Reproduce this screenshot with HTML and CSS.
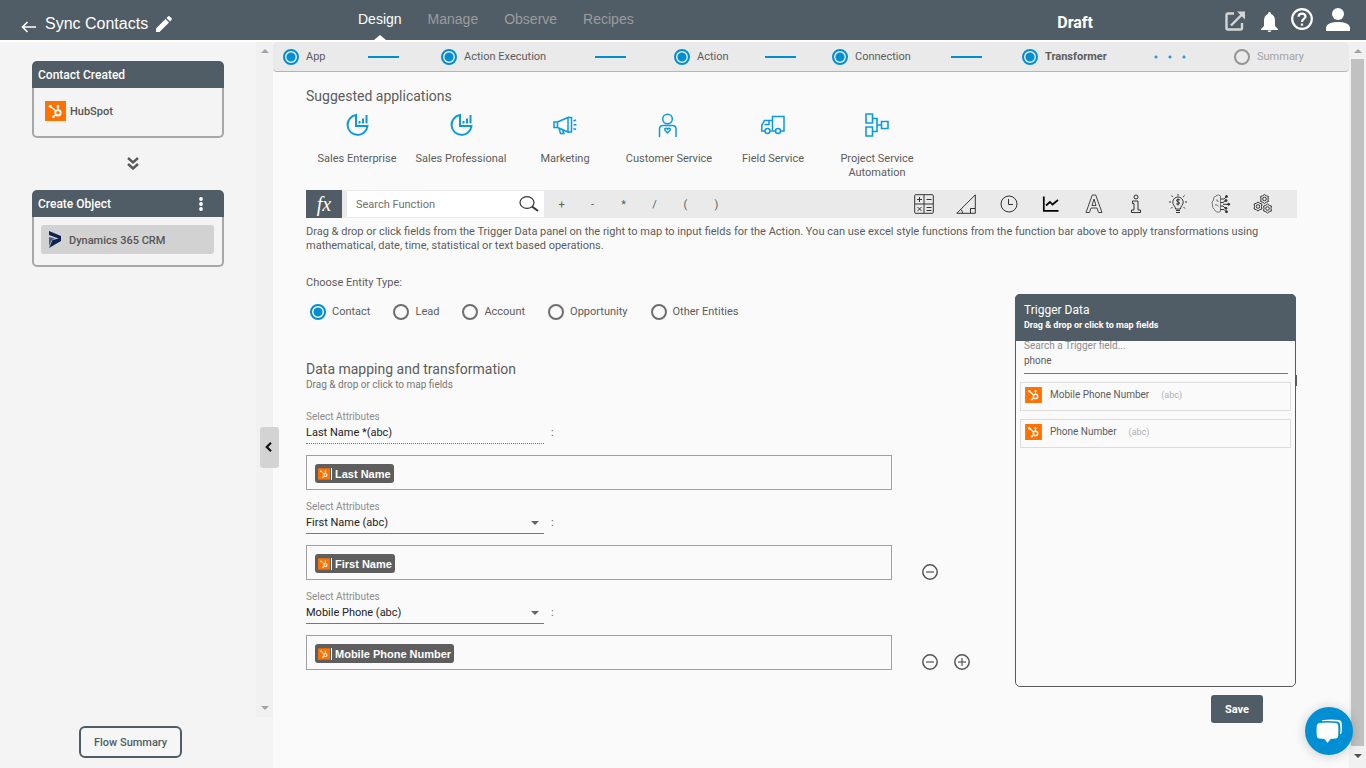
FILE: index.html
```html
<!DOCTYPE html>
<html lang="en">
<head>
<meta charset="utf-8">
<meta name="viewport" content="width=device-width, initial-scale=1">
<title>Sync Contacts</title>
<link rel="stylesheet" href="styles.css">
</head>
<body>
<svg class="defs" aria-hidden="true">
  <symbol id="hubspot" viewBox="0 0 21 20">
    <rect width="21" height="20" fill="#ff7200"/>
    <g fill="none" stroke="#fff" stroke-width="1.4">
      <circle cx="13" cy="11.8" r="2.7" stroke-width="1.8"/>
      <path d="M13 9V5.5M11 10L5.500 5.600M11 13.800L8.500 15.600"/>
    </g>
    <g fill="#fff"><circle cx="13" cy="5.200" r="1.300"/><circle cx="5.300" cy="5.200" r="1.500"/><circle cx="8.300" cy="15.700" r="1.200"/></g>
  </symbol>
  <symbol id="sales" viewBox="0 0 24 24">
    <g fill="none" stroke="#0b9ae0" stroke-width="2">
      <path d="M11 2A10 10 0 1 0 22.500 13H11Z"/>
      <path d="M14.500 10.500V8M18 10.500V5.500M21.500 10.500V2"/>
    </g>
  </symbol>
  <symbol id="minus" viewBox="0 0 16 16">
    <path d="M4 8H12" stroke="#555" stroke-width="1.200"/><circle cx="8" cy="8" r="7.200" fill="none" stroke="#555" stroke-width="1.500"/>
  </symbol>
</svg>

<header class="topbar">
  <div class="topbar-title">
    <a href="#" aria-label="Back"><svg width="16" height="12" viewBox="0 0 16 12" fill="none" stroke="#fff" stroke-width="1.600"><path d="M15 6H1.500M6.500 1L1.500 6L6.500 11"/></svg></a>
    <h1>Sync Contacts</h1>
    <button class="bare" aria-label="Edit name"><svg width="16" height="16" viewBox="0 0 16 16" fill="#fff"><path d="M0 16V12.500L9.500 3L13 6.500L3.500 16ZM10.500 2L12.300.300Q13 -.200 13.700.400L15.600 2.300Q16.200 3 15.600 3.700L14 5.500Z"/></svg></button>
  </div>
  <nav class="tabs">
    <a href="#" class="active">Design</a>
    <a href="#">Manage</a>
    <a href="#">Observe</a>
    <a href="#">Recipes</a>
  </nav>
  <strong class="status">Draft</strong>
  <div class="topbar-icons">
    <button class="bare" aria-label="Open"><svg width="20" height="20" viewBox="0 0 20 20" fill="none" stroke="#d3d6d8" stroke-width="2.400"><path d="M9 2.500H3Q1.500 2.500 1.500 4V17Q1.500 18.500 3 18.500H15.500Q17 18.500 17 17V12M6 14.500L16.500 4"/><path d="M12 .500H20V8.500Z" fill="#d3d6d8" stroke="none"/></svg></button>
    <button class="bare bell" aria-label="Notifications"><svg width="17" height="20" viewBox="0 0 17 20" fill="#fff"><path d="M7 2Q7 0 8.500 0T10 2Q14 3.500 14 8.500V14L17 17V18H0V17L3 14V8.500Q3 3.500 7 2ZM6.500 18.500H10.500Q10 20 8.500 20T6.500 18.500Z"/></svg></button>
    <button class="bare" aria-label="Help"><svg width="22" height="22" viewBox="0 0 22 22" fill="none" stroke="#fff" stroke-width="2.200"><circle cx="11" cy="11" r="9.800"/><path d="M7.500 8.800Q7.700 5.600 11 5.600T14.500 8.500C14.500 10.500 11 11 11 14"/><path d="M11 15.500V17.700"/></svg></button>
    <button class="bare user" aria-label="Account"><svg width="24" height="23" viewBox="0 0 24 23" fill="#fff"><ellipse cx="12" cy="6" rx="6" ry="6"/><path d="M0 23V19Q2 14 12 14T24 19V23Z"/></svg></button>
  </div>
</header>

<div class="shell">
  <aside class="side">
    <div class="side-scroll">
      <div class="flow">
        <section class="card">
          <h2>Contact Created</h2>
          <div class="card-body"><div class="conn"><svg width="21" height="20"><use href="#hubspot"/></svg><span>HubSpot</span></div></div>
        </section>
        <svg class="down" width="12" height="13" viewBox="0 0 12 13" fill="none" stroke="#58595b" stroke-width="2.400"><path d="M1 1L6 5.500L11 1M1 7L6 11.500L11 7"/></svg>
        <section class="card">
          <h2>Create Object
            <button class="bare" aria-label="More"><svg width="4" height="14" viewBox="0 0 4 14" fill="#fff"><circle cx="2" cy="2" r="1.900"/><circle cx="2" cy="7" r="1.900"/><circle cx="2" cy="12" r="1.900"/></svg></button>
          </h2>
          <div class="card-body"><div class="conn selected"><svg width="12" height="17" viewBox="0 0 12 17"><path d="M0 0L12 5V10L0 17L3.500 9L9.500 7.500L0 4Z" fill="#0f2350"/><path d="M0 6L6 7.500L3 9L0 15Z" fill="#4a5b8c"/></svg><span>Dynamics 365 CRM</span></div></div>
        </section>
      </div>
      <div class="scrollbar" aria-hidden="true"><i class="up"></i><i class="dn"></i></div>
    </div>
    <div class="side-foot"><button class="outline">Flow Summary</button></div>
  </aside>
  <button class="collapse" aria-label="Collapse panel"><svg width="7" height="10" viewBox="0 0 7 10" fill="none" stroke="#111" stroke-width="2.200"><path d="M6 .800L1.800 5L6 9.200"/></svg></button>

  <main class="main">
    <ol class="steps">
      <li><span class="dot"></span>App<i class="line"></i></li>
      <li><span class="dot"></span>Action Execution<i class="line"></i></li>
      <li><span class="dot"></span>Action<i class="line"></i></li>
      <li><span class="dot"></span>Connection<i class="line"></i></li>
      <li class="current"><span class="dot"></span>Transformer<i class="dots"></i></li>
      <li class="todo"><span class="dot"></span>Summary</li>
    </ol>

    <div class="content">
      <h2 class="heading">Suggested applications</h2>
      <ul class="apps">
        <li><svg width="24" height="24"><use href="#sales"/></svg>Sales Enterprise</li>
        <li><svg width="24" height="24"><use href="#sales"/></svg>Sales Professional</li>
        <li><svg width="24" height="24" viewBox="0 0 24 24" fill="none" stroke="#0b9ae0" stroke-width="1.500"><path d="M1 9H4.500V14.500H1ZM4.500 9L15 4.500V19L4.500 14.500M15 4.500H18.500V19H15M6 15L7.500 20.500H11L9.500 17M20.500 8L23 7M20.500 11.800H23.500M20.500 15.500L23 16.500"/></svg>Marketing</li>
        <li><svg width="24" height="24" viewBox="0 0 24 24" fill="none" stroke="#0b9ae0" stroke-width="1.500"><circle cx="10.500" cy="6" r="4.800"/><path d="M2.500 24V16Q2.500 12.500 6 12.500H15.500Q19 12.500 19 16V24"/><path d="M10.500 20L7.800 17Q7.500 15.300 9 15.200Q10 15.200 10.500 16Q11 15.200 12 15.200Q13.500 15.300 13.200 17Z"/></svg>Customer Service</li>
        <li><svg width="24" height="24" viewBox="0 0 24 24" fill="none" stroke="#0b9ae0" stroke-width="1.500"><path d="M11.500 17V3.500H23V18H20M14.500 18H9.500M4 18H.800V12L3.500 7.500H11.500M3.500 11.500H8V7.500"/><circle cx="6.500" cy="18" r="2.500"/><circle cx="17" cy="18" r="2.500"/></svg>Field Service</li>
        <li><svg width="24" height="24" viewBox="0 0 24 24" fill="none" stroke="#0b9ae0" stroke-width="1.600"><path d="M1 1H7.500V10H1ZM1 14H7.500V23H1ZM16.500 8.500H23V15.500H16.500ZM7.500 5.500H12V18.500H7.500M12 12H16.500"/></svg>Project Service Automation</li>
      </ul>

      <div class="fnbar">
        <span class="fx">fx</span>
        <label class="fnsearch"><input type="text" placeholder="Search Function" aria-label="Search Function">
          <svg width="20" height="16" viewBox="0 0 20 16" fill="none" stroke="#333"><ellipse cx="8" cy="6.500" rx="7" ry="5.800" stroke-width="1.200"/><path d="M13 10.500L19 15" stroke-width="2"/></svg></label>
        <div class="ops"><button>+</button><button>-</button><button>*</button><button>/</button><button>(</button><button>)</button></div>
        <div class="cats">
          <button aria-label="Math"><svg viewBox="0 0 20 20"><rect x=".700" y=".700" width="18.600" height="18.600" rx="1"/><path d="M10 1V19M1 10H19M3 5.500H8M5.500 3V8M12.500 5.500H17.500M3.500 13L7.500 17M7.500 13L3.500 17M12.500 13.500H17.500M12.500 16.500H17.500"/></svg></button>
          <button aria-label="Trigonometry"><svg viewBox="0 0 20 20"><path d="M.800 19.300L19.300.800V19.300ZM14.500 19V14.500H19M5 15.500Q6.500 17 6.500 19"/></svg></button>
          <button aria-label="Date and time"><svg viewBox="0 0 20 20"><circle cx="10" cy="10" r="8"/><path d="M9.500 5V10.500H14"/></svg></button>
          <button aria-label="Statistics"><svg viewBox="0 0 20 20"><path d="M2.800 2.500V16.800H17.500" stroke="#000" stroke-width="1.700"/><path d="M5 11.500L9 8L11.500 10.500L17 6" stroke="#000" stroke-width="1.700"/></svg></button>
          <button aria-label="Text"><svg viewBox="0 0 20 20"><path d="M8.300 1H11.700L18 18.500H14.500L13 14H7L5.500 18.500H2ZM8 11.500H12L10 5Z" stroke="#444"/></svg></button>
          <button aria-label="Information"><svg viewBox="0 0 20 20"><circle cx="10" cy="3" r="2"/><path d="M6.500 7H12V16H14.500V18.500H5.500V16H8V9.500H6.500Z"/></svg></button>
          <button aria-label="Finance"><svg viewBox="0 0 20 20"><path d="M7.500 15Q7.500 13 6 11.500A5.200 5.200 0 1 1 14 11.500Q12.500 13 12.500 15ZM8 16.500H12M8 18.500H12M10 0V1.800M3.500 1.500L4.800 3M16.500 1.500L15.200 3M1 8H3M17 8H19M3 14.500L4.500 13M17 14.500L15.500 13"/><path d="M12 6Q10 4.800 8.500 6C8 8 12 7.500 11.700 9.500Q10 11 8.200 9.800M10 4.500V11.500"/></svg></button>
          <button aria-label="Intelligence"><svg viewBox="0 0 20 20"><path d="M9.500 2Q7-.500 5 2Q2 2.500 2.500 6Q0 8 1.500 11Q1 14 3.500 15.500Q5 19.500 9.500 17.500ZM5 6Q7.500 5.500 7 8M4 11Q6.500 10 7.500 12.500" stroke="#777"/><path d="M9.500 5H13L15 3M9.500 8.500H12L14 7M9.500 12H12L14 14M9.500 15.500H13L15 17.500M12 10.300H17"/><g fill="#333"><circle cx="15.500" cy="2.500" r="1"/><circle cx="15" cy="6.500" r="1"/><circle cx="17.700" cy="10.300" r="1"/><circle cx="15" cy="14.300" r="1"/><circle cx="15.500" cy="17.700" r="1"/></g></svg></button>
          <button aria-label="Settings"><svg viewBox="0 0 20 20"><path d="M11.500.500L13.200 1.800L15.400 2.500L15 5L15.400 7.500L13.200 8.200L11.500 9.500L9.800 8.200L7.600 7.500L8 5L7.600 2.500L9.800 1.800ZM5 8L6.700 9.300L8.900 10L8.500 12.500L8.900 15L6.700 15.700L5 17L3.300 15.700L1.100 15L1.500 12.500L1.100 10L3.300 9.300ZM14.500 10L16.200 11.300L18.400 12L18 14.500L18.400 17L16.200 17.700L14.500 19L12.800 17.700L10.600 17L11 14.500L10.600 12L12.800 11.300Z"/><circle cx="11.500" cy="5" r="1.800"/><circle cx="5" cy="12.500" r="1.800"/><circle cx="14.500" cy="14.500" r="1.800"/></svg></button>
        </div>
      </div>
      <p class="help">Drag &amp; drop or click fields from the Trigger Data panel on the right to map to input fields for the Action. You can use excel style functions from the function bar above to apply transformations using mathematical, date, time, statistical or text based operations.</p>

      <div class="work">
        <div class="mapping">
          <fieldset class="entities">
            <legend>Choose Entity Type:</legend>
            <div class="radios">
              <label><input type="radio" name="entity" checked>Contact</label>
              <label><input type="radio" name="entity">Lead</label>
              <label><input type="radio" name="entity">Account</label>
              <label><input type="radio" name="entity">Opportunity</label>
              <label><input type="radio" name="entity">Other Entities</label>
            </div>
          </fieldset>
          <h2 class="heading">Data mapping and transformation</h2>
          <p class="sub">Drag &amp; drop or click to map fields</p>

          <div class="row">
            <label class="lbl" for="attr1">Select Attributes</label>
            <div class="attr"><input class="field fixed" id="attr1" type="text" value="Last Name *(abc)" readonly><span>:</span></div>
            <div class="target"><div class="box"><span class="chip"><svg width="12" height="12"><use href="#hubspot"/></svg><b>Last Name</b></span></div><div class="acts"></div></div>
          </div>
          <div class="row">
            <label class="lbl" for="attr2">Select Attributes</label>
            <div class="attr"><div class="pick"><select class="field" id="attr2"><option>First Name (abc)</option></select></div><span>:</span></div>
            <div class="target"><div class="box"><span class="chip"><svg width="12" height="12"><use href="#hubspot"/></svg><b>First Name</b></span></div><div class="acts"><button class="bare" aria-label="Remove"><svg width="16" height="16"><use href="#minus"/></svg></button></div></div>
          </div>
          <div class="row">
            <label class="lbl" for="attr3">Select Attributes</label>
            <div class="attr"><div class="pick"><select class="field" id="attr3"><option>Mobile Phone (abc)</option></select></div><span>:</span></div>
            <div class="target"><div class="box"><span class="chip"><svg width="12" height="12"><use href="#hubspot"/></svg><b>Mobile Phone Number</b></span></div><div class="acts"><button class="bare" aria-label="Remove"><svg width="16" height="16"><use href="#minus"/></svg></button><button class="bare" aria-label="Add"><svg width="16" height="16" viewBox="0 0 16 16"><use href="#minus"/><path d="M8 4V12" stroke="#555" stroke-width="1.200"/></svg></button></div></div>
          </div>
        </div>

        <div class="trigger-col">
          <section class="trigger">
            <header><h3>Trigger Data</h3><p>Drag &amp; drop or click to map fields</p></header>
            <div class="trigger-search">
              <label for="tsearch">Search a Trigger field...</label>
              <input id="tsearch" type="text" value="phone">
            </div>
            <ul>
              <li><svg width="17" height="16"><use href="#hubspot"/></svg>Mobile Phone Number<small>(abc)</small></li>
              <li><svg width="17" height="16"><use href="#hubspot"/></svg>Phone Number<small>(abc)</small></li>
            </ul>
            <i class="thumb"></i>
          </section>
          <button class="save">Save</button>
        </div>
      </div>
    </div>
  </main>
  <div class="scrollbar dark" aria-hidden="true"><i class="up"></i><i class="bar"></i><i class="dn"></i></div>
</div>

<button class="chat" aria-label="Open chat"><svg width="26" height="24" viewBox="0 0 26 24" fill="#fff"><path d="M3.500 4Q12 3 20 4Q22 4.200 22.200 6.500Q22.600 11.500 22.200 17Q22 19.200 20 19.500L14.500 20L11.500 24L8.500 20L3 19.500Q1 19.200.800 17Q.300 11.500.800 6.500Q1.200 4.200 3.500 4Z"/><path d="M6 2.200V1.200Q14-.300 23 1Q25.600 1.300 25.700 4Q26.200 9 25.500 14.500L24 15Q24.800 10 24 5Q23.700 3 21.500 2.500Q13 1.600 6 2.200Z"/></svg></button>
</body>
</html>
```
FILE: styles.css
```css
* { box-sizing: border-box; }
body {
  margin: 0;
  height: 100vh;
  display: flex;
  flex-direction: column;
  background: #fff;
  color: #5c5c5c;
  font: 11px/14px Roboto, "Liberation Sans", sans-serif;
}
h1, h2, h3, p, ul, ol { margin: 0; padding: 0; font-weight: 400; }
ul, ol { list-style: none; }
button, input, select { font: inherit; color: inherit; }
svg { display: block; flex: none; }
i { display: block; }
.defs { position: absolute; width: 0; height: 0; }
.bare { border: 0; padding: 0; background: none; cursor: pointer; }

.topbar { display: flex; height: 40px; flex: none; background: #515d66; color: #fff; }
.topbar-title {
  width: 358px;
  padding: 8px 0 0 21px;
  display: flex;
  align-items: center;
  gap: 8px;
}
.topbar-title a { padding-top: 6px; }
.topbar-title h1 { font: 16px/20px "Liberation Sans", Arial, sans-serif; }
.tabs { display: flex; gap: 26px; font: 14px/18px "Liberation Sans", Arial, sans-serif; }
.tabs a { display: flex; flex-direction: column; justify-content: space-between; align-items: center; padding-top: 10px; color: #9c9c9c; text-decoration: none; }
.tabs .active { color: #fff; }
.tabs .active::after { content: ""; border: 6px solid transparent; border-top: 0; border-bottom: 5px solid #fff; }
.status { margin-left: auto; padding-top: 13px; font: 700 16px/20px Roboto, sans-serif; }
.topbar-icons { display: flex; align-items: flex-start; padding: 8px 16px 0 132px; gap: 13px; }
.topbar-icons > :first-child { padding-top: 3px; }
.topbar-icons .bell { padding: 4px 0 0 3px; }

.shell { flex: 1; display: flex; min-height: 0; padding-top: 2px; position: relative; }
.side { width: 273px; flex: none; display: flex; flex-direction: column; background: #f4f4f4; }
.side-scroll { flex: 1; display: flex; }
.flow { flex: 1; display: flex; flex-direction: column; padding: 19px 32px 0; }
.card { color: #555; font-weight: 500; }
.card h2 {
  display: flex;
  justify-content: space-between;
  align-items: center;
  padding: 7px 21px 6px 6px;
  border-radius: 5px 5px 0 0;
  background: #515d66;
  color: #fff;
  font-size: 12px;
  font-weight: 500;
}
.card-body { height: 50px; padding: 8px 8px 8px 7px; border: 2px solid #a8a8a8; border-top: 0; border-radius: 0 0 5px 5px; }
.conn { display: flex; align-items: center; gap: 4px; height: 29px; padding-left: 4px; }
.conn span { padding-top: 2px; }
.conn.selected { gap: 8px; padding-left: 8px; border-radius: 3px; background: #d2d2d2; }
.down { margin: 19px 0 20px 95px; }
.side-foot { height: 51px; padding-left: 79px; display: flex; align-items: flex-start; padding-top: 9px; }
.outline { height: 32px; padding: 1px 13px 0; border: 2px solid #515d66; border-radius: 6px; background: #f6f6f6; color: #515d66; font-weight: 500; }
.collapse { position: absolute; left: 260px; top: 387px; width: 19px; height: 41px; display: grid; place-items: center; padding: 0 2px 2px 0; border: 0; border-radius: 3px; background: #d3d3d3; }

.scrollbar { width: 17px; flex: none; display: flex; flex-direction: column; align-items: center; justify-content: space-between; padding: 7px 0 7px; background: #f1f1f1; }
.up, .dn { border: 4px solid transparent; }
.up { border-top: 0; border-bottom-color: #a3a3a3; }
.dn { border-bottom: 0; border-top-color: #a3a3a3; }
.dark { padding-bottom: 10px; }
.dark .bar { flex: 1; width: 13px; margin: 6px 0 8px; background: #c1c1c1; }
.dark .dn { border-top-color: #505050; }

.main { flex: 1; min-width: 0; background: #fafafa; }
.steps { display: grid; grid-template-columns: 158fr 233fr 158fr 190fr 212fr 115fr; height: 30px; padding-left: 10px; border-bottom: 1px solid #b5b5b5; border-radius: 4px; background: #eaeaea; }
.steps li { display: flex; align-items: center; }
.dot { width: 16px; height: 16px; margin-right: 7px; border: 2px solid #008fd3; border-radius: 50%; background: radial-gradient(circle, #008fd3 4px, transparent 5px); }
.line { width: 31px; height: 2px; margin: 0 auto; background: #008fd3; }
.dots { width: 42px; height: 4px; margin: 0 auto; background: radial-gradient(circle, #2e9ad6 1px, transparent 2px) 0 0 / 14px 4px repeat-x; }
.current { font-weight: 700; }
.todo { color: #a3a3a3; }
.todo .dot { border-color: #959595; background: none; }

.content { padding: 16px 52px 0 33px; }
.heading { font-size: 14px; line-height: 16px; }
.apps { display: flex; padding-top: 9px; height: 86px; margin-left: -1px; }
.apps li { width: 104px; padding: 0 4px; display: flex; flex-direction: column; align-items: center; gap: 15px; text-align: center; }

.fnbar { display: flex; height: 28px; background: #eaeaea; }
.fx { width: 36px; background: #515d66; color: #fff; font: italic 20px/28px "Liberation Serif", serif; text-align: center; }
.fnsearch { display: flex; align-items: center; width: 197px; margin: 1px 0 1px 5px; padding: 0 5px 0 9px; background: #fff; }
.fnsearch input { flex: 1; min-width: 0; padding: 2px 0 0; border: 0; outline: 0; }
.fnsearch input::placeholder { color: #707070; opacity: 1; }
.ops, .cats { display: flex; }
.ops { padding-left: 2px; }
.ops button { width: 31px; padding: 2px 0 0; border: 0; background: none; }
.cats { width: 383px; margin-left: auto; padding-right: 24px; justify-content: space-between; align-items: center; }
.cats button { padding: 0; border: 0; background: none; }
.cats svg { width: 20px; height: 20px; fill: none; stroke: #333; stroke-width: 1; }
.help { padding-top: 7px; }

.work { display: grid; grid-template-columns: 1fr 282px; }
.entities { margin: 0; padding: 0; border: 0; padding-top: 23px; }
.entities legend { float: left; width: 100%; padding: 0; }
.radios { clear: both; display: flex; gap: 23px; padding: 14px 0 0 4px; }
.radios label { display: flex; align-items: center; gap: 6px; }
.radios input { appearance: none; width: 16px; height: 16px; margin: 0; border: 2px solid #6e6e6e; border-radius: 50%; }
.radios input:checked { border-color: #008fd3; background: radial-gradient(circle, #008fd3 4px, transparent 5px); }
.mapping .heading { padding-top: 41px; line-height: 17px; }
.sub { font-size: 10px; line-height: 14px; color: #777; }
.row { padding-top: 10px; }
.sub + .row { padding-top: 18px; }
.lbl { display: block; color: #8c8c8c; font-size: 10px; line-height: 13px; }
.attr { display: flex; gap: 7px; line-height: 20px; }
.pick { position: relative; }
.pick::after { content: ""; position: absolute; right: 5px; top: 8px; border: 4px solid transparent; border-bottom: 0; border-top-color: #666; pointer-events: none; }
.field { display: block; appearance: none; width: 238px; height: 21px; padding: 0 0 1px; border: 0; border-bottom: 1px solid #777; border-radius: 0; outline: 0; background: none; color: #222; }
.field.fixed { border-bottom-style: dotted; }
.target { display: flex; padding-top: 11px; }
.box { flex: 1; height: 35px; padding: 8px; border: 1px solid #a0a0a0; }
.chip { display: inline-flex; align-items: center; height: 19px; padding: 0 3px; border-radius: 3px; background: #5e5e5e; color: #fff; font-family: "Liberation Sans", Arial, sans-serif; }
.chip b { margin-left: 1px; padding-left: 3px; border-left: 1px solid #fff; line-height: 12px; }
.acts { display: flex; align-items: flex-end; gap: 16px; width: 123px; padding-left: 30px; }

.trigger-col { display: flex; flex-direction: column; padding: 41px 1px 0 0; }
.trigger { position: relative; height: 393px; border: 1px solid #5a5a5a; border-radius: 5px; }
.trigger header { margin: -1px -1px 0; height: 47px; padding: 8px 9px; border-radius: 5px 5px 0 0; background: #515d66; color: #fff; }
.trigger h3 { font-size: 12px; line-height: 16px; }
.trigger header p { font-size: 9px; font-weight: 700; }
.trigger-search { padding: 0 7px 0 8px; }
.trigger-search label { display: block; color: #8c8c8c; font-size: 10px; line-height: 10px; }
.trigger-search input { display: block; width: 100%; height: 23px; padding: 0 0 4px; border: 0; border-bottom: 1px solid #777; outline: 0; background: none; font-size: 10px; }
.trigger ul { display: grid; gap: 8px; padding: 8px 4px; }
.trigger li { display: flex; align-items: center; gap: 8px; height: 29px; padding: 0 4px 3px; border: 1px solid #ddd; font-size: 10px; }
.trigger small { padding-left: 4px; color: #b0b0b0; font-size: 9px; }
.thumb { position: absolute; right: -2px; top: 80px; width: 2px; height: 11px; background: #5a5a5a; }
.save { align-self: flex-end; height: 28px; margin: 8px 33px 0 0; padding: 1px 14px 0; border: 0; border-radius: 3px; background: #515d66; color: #fff; font-weight: 700; }
.chat { position: fixed; right: 13px; bottom: 13px; width: 48px; height: 48px; display: grid; place-items: center; border: 0; border-radius: 50%; background: #008fd3; box-shadow: 0 1px 12px rgba(0, 0, 0, .2); }
```
